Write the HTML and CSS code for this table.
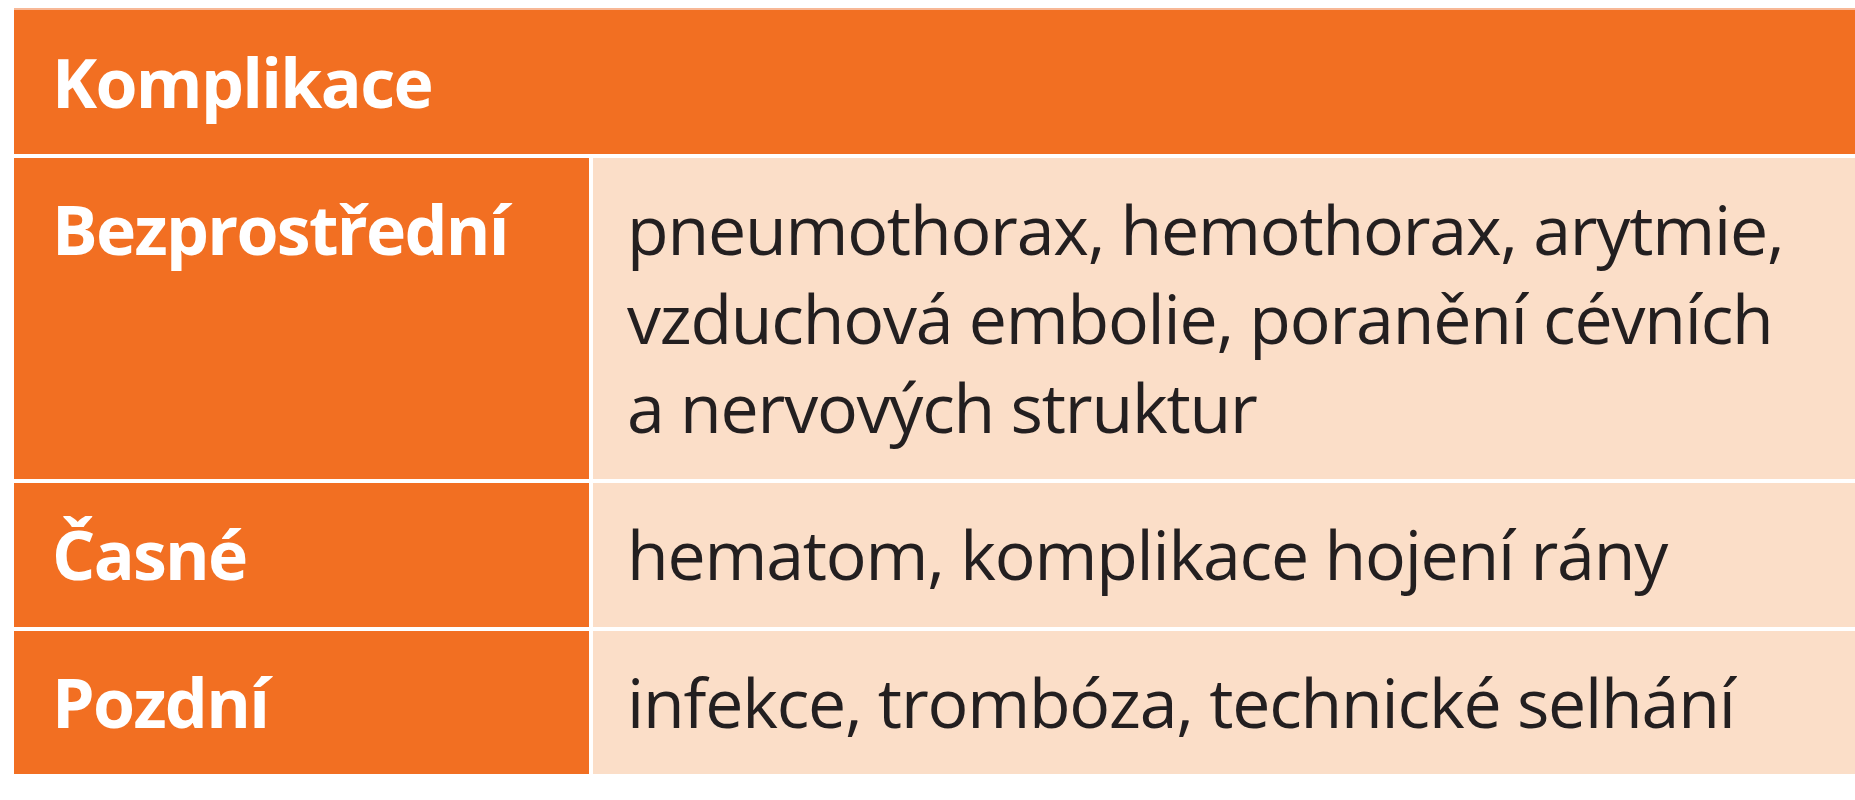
FILE: index.html
```html
<!DOCTYPE html>
<html lang="cs">
<head>
<meta charset="utf-8">
<title>Komplikace</title>
<link rel="stylesheet" href="styles.css">
</head>
<body>
<div class="page">
  <div class="table">
    <div class="cell head">Komplikace</div>
    <div class="cell label">Bezprostřední</div>
    <div class="cell value">pneumothorax, hemothorax, arytmie,<br>vzduchová embolie, poranění cévních<br>a nervových struktur</div>
    <div class="cell label">Časné</div>
    <div class="cell value">hematom, komplikace hojení rány</div>
    <div class="cell label">Pozdní</div>
    <div class="cell value">infekce, trombóza, technické selhání</div>
  </div>
</div>
</body>
</html>
```
FILE: styles.css
```css
html, body {
  margin: 0;
  padding: 0;
  background: #ffffff;
  overflow: hidden;
}

.page {
  padding: 8px 0 0 14px;
}

.table {
  display: grid;
  grid-template-columns: 575px 1300px;
  gap: 4px;
  background: #ffffff;
  border-top: 2px solid #f8b896;
  font-family: "Open Sans", "Noto Sans", sans-serif;
  font-size: 68px;
  line-height: 88.7px;
  letter-spacing: -1.2px;
}

.cell {
  padding: 27.5px 0 27.5px 0;
  white-space: nowrap;
}

.head {
  grid-column: 1 / span 2;
  background: #f26f22;
  color: #ffffff;
  font-weight: 700;
  padding-left: 38px;
  letter-spacing: -1.7px;
}

.label {
  background: #f26f22;
  color: #ffffff;
  font-weight: 700;
  padding-left: 38px;
  letter-spacing: -1.7px;
}

.value {
  background: #fbdec8;
  color: #231f20;
  padding-left: 34px;
}
```
